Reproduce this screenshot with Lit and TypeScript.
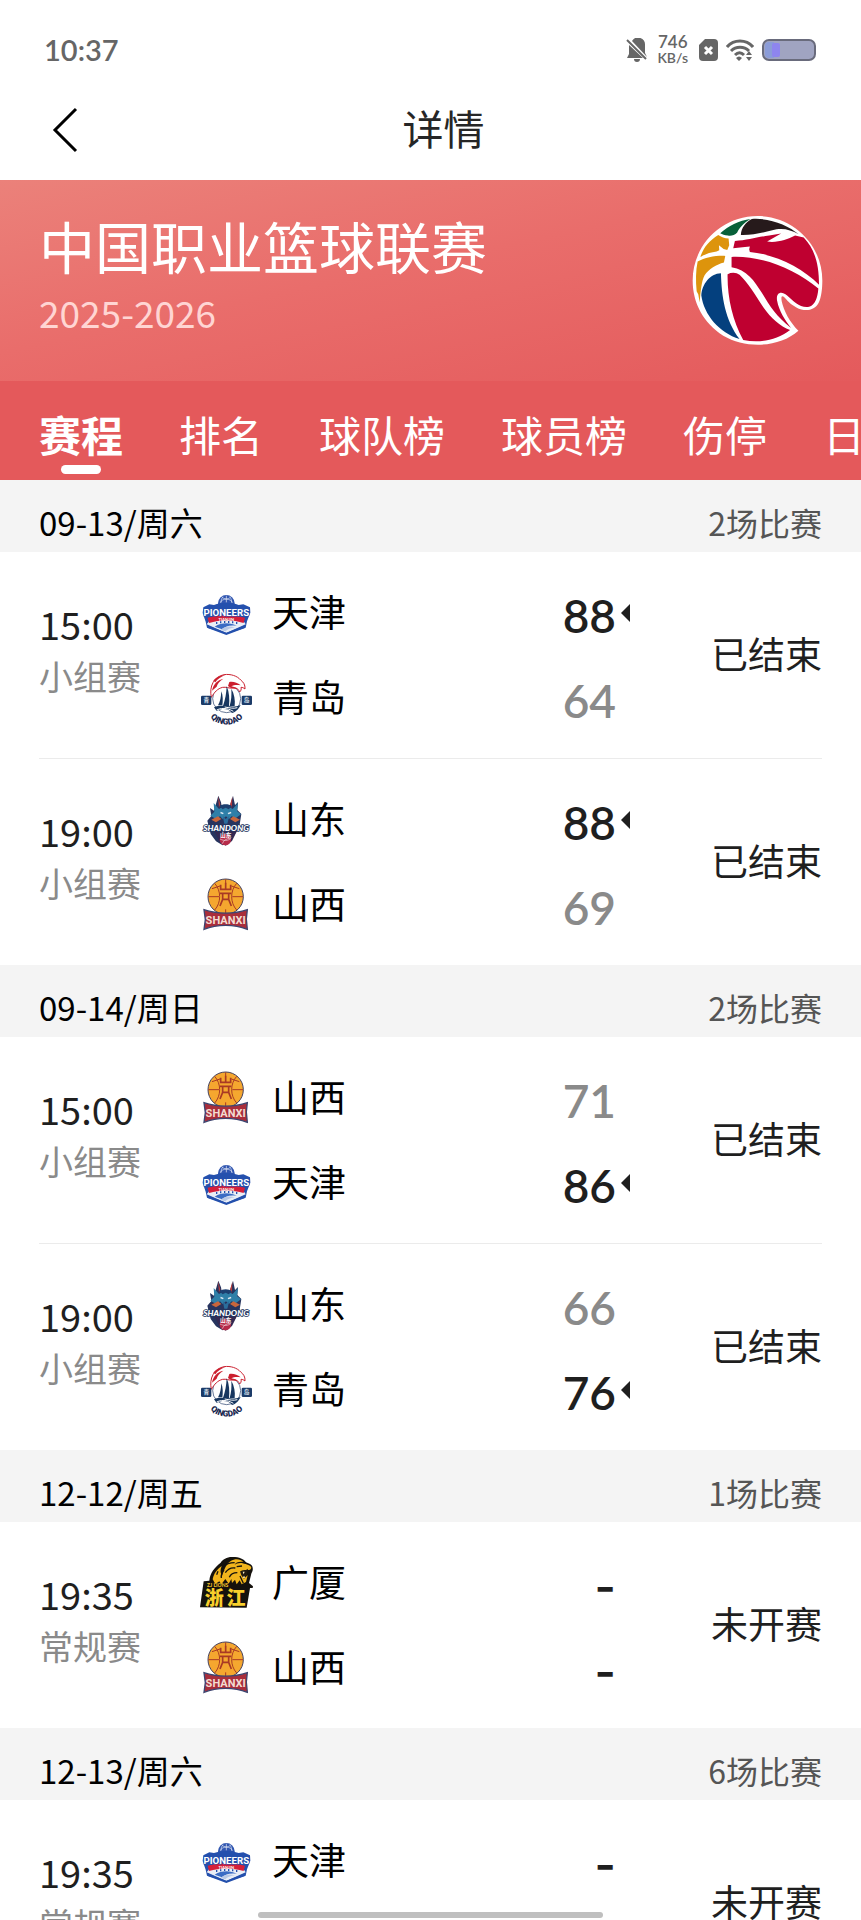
import { LitElement, html, svg, css, nothing } from 'lit';
import type { TemplateResult } from 'lit';
import { customElement, property, state } from 'lit/decorators.js';
import { classMap } from 'lit/directives/class-map.js';

interface Side {
  team: string;
  score?: number;
}

interface Match {
  time: string;
  stage: string;
  status: string;
  sides: Side[];
}

interface Day {
  date: string;
  count: number;
  matches: Match[];
}

const TABS = ['赛程', '排名', '球队榜', '球员榜', '伤停', '日榜'];

const DAYS: Day[] = [
  {
    date: '09-13/周六',
    count: 2,
    matches: [
      {
        time: '15:00',
        stage: '小组赛',
        status: '已结束',
        sides: [{ team: '天津', score: 88 }, { team: '青岛', score: 64 }],
      },
      {
        time: '19:00',
        stage: '小组赛',
        status: '已结束',
        sides: [{ team: '山东', score: 88 }, { team: '山西', score: 69 }],
      },
    ],
  },
  {
    date: '09-14/周日',
    count: 2,
    matches: [
      {
        time: '15:00',
        stage: '小组赛',
        status: '已结束',
        sides: [{ team: '山西', score: 71 }, { team: '天津', score: 86 }],
      },
      {
        time: '19:00',
        stage: '小组赛',
        status: '已结束',
        sides: [{ team: '山东', score: 66 }, { team: '青岛', score: 76 }],
      },
    ],
  },
  {
    date: '12-12/周五',
    count: 1,
    matches: [
      {
        time: '19:35',
        stage: '常规赛',
        status: '未开赛',
        sides: [{ team: '广厦' }, { team: '山西' }],
      },
    ],
  },
  {
    date: '12-13/周六',
    count: 6,
    matches: [
      {
        time: '19:35',
        stage: '常规赛',
        status: '未开赛',
        sides: [{ team: '天津' }, { team: '山东' }],
      },
    ],
  },
];

const tianjin = svg`
  <circle cx="109" cy="68" r="25" fill="#2f55b0" />
  <path d="M91 66c4-14 32-14 36 0M97 50c6 6 18 6 24 0M109 45v20M99 48c-5 6-6 12-6 18M119 48c5 6 6 12 6 18" fill="none" stroke="#e8edf8" stroke-width="2" />
  <path d="M40 80l18-9 14 2c22-8 52-8 74 0l14-2 20 9 1 16-10 26-4 19-58 22-58-22-4-18-9-26z" fill="#2450ad" />
  <path d="M50 131l59 26 58-26-6-9c-34-10-70-10-104 0z" fill="#e9eef6" />
  <path d="M53 111c34-10 78-10 112 0l-4 16c-32-10-72-10-104 0z" fill="#d51f3a" />
  <path d="M52 134l57 22 57-22-2 8-55 17-55-17z" fill="#2450ad" />
  <path d="M74 138c22-14 50-12 66-2-20-4-34 2-44 10z" fill="#3b6cc4" />
  <path d="M92 148c12-12 30-12 42-8-12 2-22 6-28 12z" fill="#b9c9e6" />
  <path d="M80 130v-6M92 128v-6M104 127v-6M116 127v-6M128 128v-6M140 130v-6" stroke="#2450ad" stroke-width="4" />
  <text x="109" y="106" text-anchor="middle" font-family="Liberation Sans Narrow, Roboto, sans-serif" font-size="29" font-weight="700" fill="#fff" stroke="#2450ad" stroke-width="3" paint-order="stroke">PIONEERS</text>
  <text x="109" y="120" text-anchor="middle" font-family="Lato, sans-serif" font-size="12" font-weight="700" fill="#fff">TIANJIN</text>
`;

const qingdao = svg`
  <circle cx="110" cy="354" r="42" fill="#fff" stroke="#1c3765" stroke-width="2" />
  <path d="M64 350c-7-32 7-62 38-68 20-3 40 4 50 16 8 6 14 14 13 27-5-4-8-5-12-5 2 7-1 11-4 14-4-10-12-14-21-12-10 2-20-4-30-2-16 4-24 14-34 30z" fill="#fff" stroke="#cb202f" stroke-width="3" />
  <path d="M66 330c4-20 16-32 34-36-12 8-18 16-20 24zM118 304c12-2 24 2 34 10-10-2-20-2-28 3 8 1 16 5 20 9-12-3-22-2-30-10zM70 300c10-12 22-16 36-17-14 6-24 12-30 22z" fill="#cb202f" />
  <path d="M84 374c7-12 9-25 10-42 5 12 5 30 3 42zM99 376c7-20 10-38 11-60 8 18 9 40 7 60zM119 376c5-18 6-32 5-52 9 16 12 34 10 52z" fill="#17365f" />
  <path d="M72 380c28-12 54 6 80-8-6 15-18 23-26 25-8-12-28-16-46-6z" fill="#17365f" />
  <path d="M80 388c20-10 40-2 50 4M104 379c14 2 26 6 38 2" fill="none" stroke="#fff" stroke-width="3" />
  <rect x="33" y="345" width="31" height="28" rx="4" fill="#1c3b68" />
  <rect x="155" y="345" width="31" height="28" rx="4" fill="#1c3b68" />
  <text x="49" y="365" text-anchor="middle" font-family="Noto Sans CJK SC, sans-serif" font-size="17" font-weight="700" fill="#dfe7f0">青</text>
  <text x="170" y="365" text-anchor="middle" font-family="Noto Sans CJK SC, sans-serif" font-size="17" font-weight="700" fill="#dfe7f0">岛</text>
  <path id="qingdao-arc" d="M53 399a66 66 0 0 0 114 0" fill="none" />
  <text font-family="Roboto, sans-serif" font-size="25" font-weight="900" fill="#17264d" text-anchor="middle">
    <textPath href="#qingdao-arc" startOffset="50%">QINGDAO</textPath>
  </text>
`;

const shandong = svg`
  <path d="M85 46l8 20 2 12h24l4-12 6-20 6 28 9-9-2 24 12 12-6 38-14 24-18 22-18 10-20-12-16-22-10-40 12-14-4-24 12 8z" fill="#27345e" />
  <path d="M84 48l7 24-4 10zM127 49l-7 24 6 10z" fill="#b33b3c" />
  <path d="M71 68l16 18 10-6 10-6 11 6 10 6 16-18-3 24 12 10-16 12-12-6-8 8-9-8-10 8-8-8-12 8-17-10 12-12z" fill="#2f7fa8" />
  <path d="M88 78c10-8 28-8 38 0l-10 9-9-5-9 5z" fill="#1d3f70" />
  <path d="M92 94l9 4-2 4-8-3zM123 94l-10 4 2 4 9-3z" fill="#dfeaf2" />
  <path d="M64 118l20-10 10 8-16 10zM150 118l-20-10-10 8 16 10z" fill="#c8663c" />
  <path d="M98 106l9 10 11-10-6 24h-9z" fill="#2b6d9c" />
  <path d="M72 150h70l-16 32-19 14-19-14z" fill="#332952" />
  <circle cx="106" cy="178" r="17" fill="#b62b49" />
  <path d="M90 176c12 6 24 6 33-2M97 190c4-10 12-16 24-16" fill="none" stroke="#f0d8de" stroke-width="2" />
  <text x="108" y="151" text-anchor="middle" font-family="Lato, sans-serif" font-size="25" font-weight="900" font-style="italic" fill="#fff" stroke="#233660" stroke-width="5" paint-order="stroke">SHANDONG</text>
  <text x="107" y="169" text-anchor="middle" font-family="Noto Sans CJK SC, sans-serif" font-size="17" font-weight="700" fill="#fff">山东</text>
`;

const shanxi = svg`
  <circle cx="107" cy="348" r="53" fill="#f5a72f" stroke="#44415f" stroke-width="3" />
  <g fill="none" stroke="#a93a24" stroke-width="3">
    <path d="M55 348h32M127 348h32M107 296v12M107 386v14M74 308c20 22 20 58 0 80M140 308c-20 22-20 58 0 80M66 324l24-8M148 324l-24-8" />
    <path d="M92 312v14h30v-14M107 306v20M90 338h34M98 338v18M116 338v18M98 356h18M98 356l-8 20M116 356l8 20" stroke-width="5" />
  </g>
  <path d="M42 387c40 14 90 14 130 0l-3 28 3 31c-40-16-90-16-130 0l4-29z" fill="#a92e3b" stroke="#3d4570" stroke-width="4" />
  <text x="107" y="431" text-anchor="middle" font-family="Roboto, sans-serif" font-size="33" font-weight="700" fill="#f3dcd2">SHANXI</text>
`;

const guangsha = svg`
  <path d="M41 122l17-2c2-24 16-40 34-54 6-10 20-18 36-17 20 0 34 6 40 16 9 3 20 8 20 16 2 11-4 14-5 22l-6 24 12 10-1 5h-8l-10 59-140-1z" fill="#15120d" />
  <path d="M68 116c4-20 14-30 27-40-4 12-5 18 1 30 6-16 10-34 26-45 14-8 30-6 38 3-14-2-23 2-26 9 6-5 14-7 24-5 12 3 24 6 26 13-2 7-8 8-14 7-8 0-14 0-18 4l7 10 3 9 11-7-5 20-13 7-6-12-9 12-5-14-9 10-2-12-8 14-10-14-12 16-6-9-12 8z" fill="#f2b51c" />
  <path d="M98 80c10-10 20-14 36-14M106 96c8-12 18-16 30-14M118 110c4-10 12-14 24-14M80 102l4-10M94 112c-1-10 2-18 8-24M140 78l16-2M150 106l10 22" fill="none" stroke="#15120d" stroke-width="4" />
  <path d="M150 92c8 0 16-2 24-8l-4 22-8 8-8-10z" fill="#221a10" />
  <path d="M158 93l3 8 3-8zM158 112l4-7 4 6z" fill="#fff3c2" />
  <text x="83" y="140" text-anchor="middle" font-family="Lato, sans-serif" font-size="15" font-weight="900" fill="#f2c32a">ZJ LIONS</text>
  <g text-anchor="middle" font-family="Noto Sans CJK SC, sans-serif" font-size="57" font-weight="900" fill="#f8cf2c">
    <text x="73" y="194">浙</text>
    <text x="138" y="194">江</text>
  </g>
`;

const LOGOS: Record<string, { box: string; art: TemplateResult<2> }> = {
  天津: { box: '30 16 162 162', art: tianjin },
  青岛: { box: '30 271 162 162', art: qingdao },
  山东: { box: '30 38 162 162', art: shandong },
  山西: { box: '30 292 162 162', art: shanxi },
  广厦: { box: '30 46 162 162', art: guangsha },
};

@customElement('match-row')
class MatchRow extends LitElement {
  @property({ attribute: false }) match!: Match;

  static styles = css`
    :host {
      display: grid;
      grid-template-columns: 161px 1fr auto;
      align-items: center;
      padding: 18px 0;
    }
    .when {
      padding-bottom: 10px;
    }
    .time {
      font-family: 'Noto Sans CJK SC', sans-serif;
      font-size: 38px;
      line-height: 54px;
      color: #1f1f1f;
    }
    .stage {
      font-size: 34px;
      line-height: 52px;
      color: #8a8a8a;
    }
    .side {
      display: flex;
      align-items: center;
      height: 85px;
    }
    .logo {
      width: 54px;
      height: 54px;
      margin-right: 18px;
      flex: none;
      overflow: visible;
    }
    .name {
      flex: 1;
      font-size: 37px;
      line-height: 54px;
      color: #000;
    }
    .score {
      padding-top: 6px;
      font-size: 46px;
      line-height: 54px;
      font-weight: 600;
      color: #1f1f1f;
    }
    .lost {
      color: #8a8a8a;
    }
    .pending {
      font-family: Inter, sans-serif;
    }
    .mark {
      width: 18px;
      display: flex;
      justify-content: center;
    }
    .status {
      min-width: 188px;
      text-align: right;
      font-size: 37px;
      line-height: 54px;
      color: #1f1f1f;
    }
  `;

  renderSide(side: Side) {
    const scores = this.match.sides.map((s) => s.score ?? 0);
    const best = Math.max(...scores);
    const played = side.score !== undefined;
    const won = played && side.score === best;
    const logo = LOGOS[side.team];
    return html`
      <div class="side">
        <svg class="logo" viewBox=${logo.box} aria-hidden="true">${logo.art}</svg>
        <span class="name">${side.team}</span>
        <span class=${classMap({ score: true, lost: played && !won, pending: !played })}>${side.score ?? '-'}</span>
        <span class="mark">
          ${won
            ? html`<svg width="9" height="18" viewBox="0 0 9 18"><path d="M9 0v18L0 9z" fill="#1f1f1f" /></svg>`
            : nothing}
        </span>
      </div>
    `;
  }

  render() {
    const { time, stage, status, sides } = this.match;
    return html`
      <div class="when">
        <div class="time">${time}</div>
        <div class="stage">${stage}</div>
      </div>
      <div>${sides.map((side) => this.renderSide(side))}</div>
      <div class="status">${status}</div>
    `;
  }
}

@customElement('app-root')
class AppRoot extends LitElement {
  @state() tab = 0;

  static styles = css`
    :host {
      display: block;
      height: 100vh;
      overflow: hidden;
      background: #fff;
      font-family: Lato, 'Noto Sans CJK SC', sans-serif;
    }
    button {
      border: none;
      background: none;
      padding: 0;
      font-family: inherit;
      cursor: pointer;
    }
    .statusbar {
      display: flex;
      align-items: center;
      justify-content: space-between;
      height: 60px;
      padding: 20px 45px 0 44px;
      color: #666;
    }
    .clock {
      font-size: 29px;
      line-height: 32px;
      font-weight: 600;
    }
    .indicators {
      display: flex;
      align-items: center;
      gap: 8px;
    }
    .speed {
      margin: 0 3px 0 1px;
      font-size: 17px;
      line-height: 16px;
      font-weight: 600;
      text-align: center;
    }
    .unit {
      font-size: 14px;
    }
    .nav {
      display: grid;
      grid-template-columns: 1fr auto 1fr;
      align-items: center;
      height: 100px;
      padding: 0 24px 0 50px;
    }
    .back {
      justify-self: start;
      display: flex;
    }
    h1 {
      margin: 0;
      font-size: 41px;
      line-height: 60px;
      font-weight: 400;
      color: #262626;
    }
    .banner {
      display: flex;
      justify-content: space-between;
      align-items: flex-start;
      padding: 35px 38px 35px 39px;
      background: linear-gradient(168deg, #eb817a, #e96d6b 45%, #e45a5c);
      color: #fff;
    }
    h2 {
      margin: 0;
      font-size: 56px;
      line-height: 66px;
      font-weight: 400;
    }
    .season {
      font-family: 'Noto Sans CJK SC', sans-serif;
      font-size: 37px;
      line-height: 62px;
      color: #ffd5d3;
    }
    .league {
      width: 131px;
      height: 131px;
      flex: none;
    }
    .tabs {
      display: flex;
      gap: 56px;
      height: 99px;
      padding-left: 39px;
      overflow: hidden;
      background: #e4595b;
    }
    .tab {
      flex: none;
      display: flex;
      flex-direction: column;
      align-items: center;
      padding-top: 26px;
      font-size: 42px;
      line-height: 58px;
      color: #fff;
    }
    .active {
      font-weight: 700;
    }
    .active::after {
      content: '';
      width: 40px;
      height: 9px;
      border-radius: 5px;
      background: #fff;
    }
    .day {
      display: flex;
      justify-content: space-between;
      height: 58px;
      padding: 14px 39px 0;
      background: #f4f4f4;
      font-family: 'Noto Sans CJK SC', sans-serif;
      line-height: 56px;
    }
    .date {
      margin: 0;
      font-size: 33px;
      font-weight: 400;
      color: #000;
    }
    .count {
      font-size: 32px;
      color: #555;
    }
    .matches {
      padding: 0 39px;
    }
    match-row + match-row {
      border-top: 1px solid #ebebeb;
    }
    .home {
      position: fixed;
      left: 30%;
      right: 30%;
      bottom: 2px;
      height: 6px;
      border-radius: 3px;
      background: #bfbfbf;
    }
  `;

  renderIndicators() {
    return html`
      <div class="indicators">
        <svg width="22" height="24" viewBox="0 0 22 24" fill="#666">
          <path d="M6 3a7 7 0 0 1 13 4v8l2 4zM3 7l14 13H1l2-4zM8 21h6a3 3 0 0 1-6 0z" />
          <path d="M1 2l19 19" stroke="#666" stroke-width="2" />
        </svg>
        <div class="speed">746<div class="unit">KB/s</div></div>
        <svg width="19" height="22" viewBox="0 0 19 22">
          <path d="M6 0h9a4 4 0 0 1 4 4v14a4 4 0 0 1-4 4H4a4 4 0 0 1-4-4V6z" fill="#666" />
          <path d="M6 8l7 7M13 8l-7 7" stroke="#fff" stroke-width="3" />
        </svg>
        <svg width="28" height="22" viewBox="0 0 28 22">
          <path d="M1 8c7-8 19-8 26 0M5 12c5-5 13-5 18 0M9 16c3-3 6-3 9 0" fill="none" stroke="#666" stroke-width="3" />
          <path d="M10 19c2-2 4-2 6 0l-3 3zM20 16l3-4 3 4zM20 18l3 4 3-4z" fill="#666" />
        </svg>
        <svg width="54" height="22" viewBox="0 0 54 22">
          <rect x="1" y="1" width="52" height="20" rx="6" fill="#a0a4c1" stroke="#696b7c" stroke-width="2" />
          <path d="M7 3h5v16H7a4 4 0 0 1-4-4V7a4 4 0 0 1 4-4z" fill="#8b9cd8" />
          <rect x="10" y="4" width="8" height="14" rx="2" fill="#8e85ef" />
        </svg>
      </div>
    `;
  }

  renderLeague() {
    return html`
      <svg class="league" viewBox="36 30 394 394" aria-hidden="true">
        <path d="M356 378C300 428 200 434 130 393C70 355 38 294 38 227C38 120 125 33 233 33C341 33 428 120 428 227C428 252 425 278 417 294C405 318 375 322 350 308C330 298 322 286 312 276C304 270 304 280 306 290C312 318 330 352 356 378z" fill="#fff" />
        <path d="M121 85C144 64 178 46 212 42C192 54 178 68 172 83C164 92 152 94 144 92C134 91 127 88 121 85z" fill="#076039" />
        <path d="M183 90C184 68 198 52 216 42C268 38 325 60 357 88C335 75 312 69 290 73C254 82 222 91 183 90z" fill="#261a1b" />
        <path d="M61 156c10-30 28-50 54-66 8 6 20 10 31 11l2 20-6 14-11-3-14-11 1 15-8 4c-18 2-34 8-49 16z" fill="#dd940c" />
        <path d="M53 170c22-12 52-18 83-17l-4 20c-22 6-46 20-58 38-10 18-12 50-15 82l-4-24-5-10c-3-30-3-62 3-89z" fill="#dd940c" />
        <path d="M123 205c2 70 12 140 56 198C118 384 72 330 64 272c2-34 26-66 59-67z" fill="#04407e" />
        <path d="M143 208c12-6 26-6 36 2 26 24 46 60 72 98 22 32 50 56 80 68-40 32-94 40-141 30-32-58-48-128-47-198z" fill="#bf0030" />
        <path d="M155 156c92-4 190 36 261 95-2 28-10 50-28 55-28 4-46-16-66-34-20-16-34-6-30 16 6 32 24 58 42 82-44-34-64-66-88-106-22-36-46-70-91-77z" fill="#bf0030" />
        <path d="M160 130l5-22c38-2 66-12 103-16l36-6-42 24c32 4 60-6 84-18l26 6c32 34 46 76 46 142-50-52-134-92-208-99l-2-8 2-8-22 2z" fill="#bf0030" />
      </svg>
    `;
  }

  render() {
    return html`
      <div class="statusbar">
        <span class="clock">10:37</span>
        ${this.renderIndicators()}
      </div>
      <header class="nav">
        <button class="back" aria-label="返回">
          <svg width="30" height="46" viewBox="0 0 30 46">
            <path d="M26 2L5 23l21 21" fill="none" stroke="#000" stroke-width="3" />
          </svg>
        </button>
        <h1>详情</h1>
      </header>
      <section class="banner">
        <div>
          <h2>中国职业篮球联赛</h2>
          <div class="season">2025-2026</div>
        </div>
        ${this.renderLeague()}
      </section>
      <nav class="tabs">
        ${TABS.map(
          (label, i) => html`
            <button class=${classMap({ tab: true, active: i === this.tab })} @click=${() => (this.tab = i)}>
              ${label}
            </button>
          `
        )}
      </nav>
      ${DAYS.map(
        (day) => html`
          <section>
            <div class="day">
              <h3 class="date">${day.date}</h3>
              <span class="count">${day.count}场比赛</span>
            </div>
            <div class="matches">
              ${day.matches.map((match) => html`<match-row .match=${match}></match-row>`)}
            </div>
          </section>
        `
      )}
      <div class="home"></div>
    `;
  }
}
